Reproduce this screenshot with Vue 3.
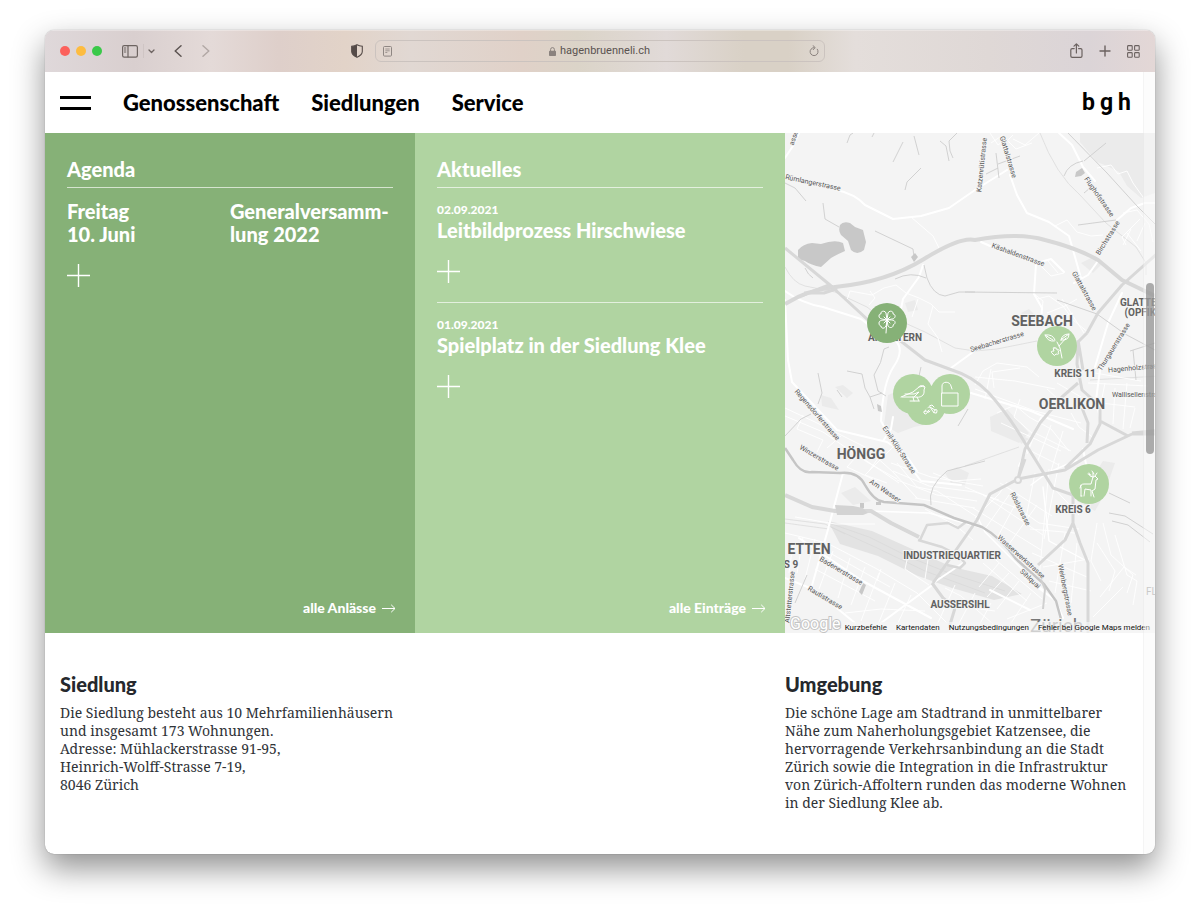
<script setup>
import { ref } from 'vue'

const address = ref('hagenbruenneli.ch')
const nav = ['Genossenschaft', 'Siedlungen', 'Service']
const news = [
  { date: '02.09.2021', title: 'Leitbildprozess Hirschwiese' },
  { date: '01.09.2021', title: 'Spielplatz in der Siedlung Klee' },
]
const mapLinks = ['Kurzbefehle', 'Kartendaten', 'Nutzungsbedingungen', 'Fehler bei Google Maps melden']

const pins = [
  { id: 'klee', label: 'Siedlung Klee', x: 102, y: 190, active: true },
  { id: 'berry', label: 'Siedlung Brombeeri', x: 141, y: 272 },
  { id: 'bird', label: 'Siedlung Vogel', x: 128, y: 261 },
  { id: 'lock', label: 'Siedlung Schloss', x: 165, y: 261 },
  { id: 'flower', label: 'Siedlung Blüte', x: 272, y: 213 },
  { id: 'deer', label: 'Siedlung Hirschwiese', x: 304, y: 351 },
]
const place = (p) => ({ left: (p.x / 370) * 100 + '%', top: (p.y / 500) * 100 + '%' })

const streets = [
  ['asse', 9, 5, -72], ['Rümlangerstrasse', 28, 50, 12], ['Katzenrütistrasse', 197, 32, -84],
  ['Glattalstrasse', 223, 24, 73], ['Flughofstrasse', 314, 64, 55], ['Birchstrasse', 323, 105, -58],
  ['Käshaldenstrasse', 233, 122, 20], ['Glattalstrasse', 299, 158, 61], ['Seebacherstrasse', 212, 209, -17],
  ['Thurgauerstrasse', 329, 214, -58], ['Hagenholzstrasse', 351, 235, -5], ['Wallisellenstrasse', 355, 262, 0],
  ['Regensdorferstrasse', 32, 282, 49], ['Winzerstrasse', 34, 325, 30], ['Emil-Klöti-Strasse', 114, 317, 57],
  ['Am Wasser', 100, 358, 34], ['Badenerstrasse', 56, 438, 31], ['Rautistrasse', 40, 465, 31],
  ['Altstetterstrasse', 5, 464, -84], ['Röslstrasse', 235, 376, 63], ['Wasserwerkstrasse', 236, 424, 42],
  ['Sihlquai', 245, 446, 43], ['Weinbergstrasse', 280, 457, 79],
]
const districts = [
  ['SEEBACH', 257, 193, 14], ['OERLIKON', 287, 276, 14], ['HÖNGG', 76, 326, 14], ['ETTEN', 24, 421, 14],
  ['AFFOLTERN', 110, 208, 10], ['KREIS 11', 290, 244, 10], ['KREIS 6', 288, 380, 10], ['S 9', 6, 435, 10],
  ['INDUSTRIEQUARTIER', 167, 426, 10], ['AUSSERSIHL', 175, 475, 10], ['GLATTBRUGG', 367, 173, 10], ['(OPFIKON)', 364, 183, 10],
]
</script>

<template>
  <div class="desktop">
    <div class="window">
      <header class="toolbar">
        <div class="lights">
          <button class="light red" aria-label="Schliessen"></button>
          <button class="light yellow" aria-label="Minimieren"></button>
          <button class="light green" aria-label="Vergrössern"></button>
        </div>
        <div class="tools left">
          <button aria-label="Seitenleiste">
            <svg width="16" height="13" viewBox="0 0 16 13" fill="none" stroke="#6d6461" stroke-width="1.2"><rect x=".6" y=".6" width="14.8" height="11.6" rx="1.6" /><path d="M6 .6v11.6M2 3h2.2M2 5h2.2M2 7h2.2" /></svg>
          </button>
          <span class="divider"></span>
          <button class="chev" aria-label="Tabgruppen">
            <svg width="7" height="5" viewBox="0 0 7 5" fill="none" stroke="#6d6461" stroke-width="1.3" stroke-linecap="round" stroke-linejoin="round"><path d="m1 1 2.5 2.5L6 1" /></svg>
          </button>
          <button class="back" aria-label="Zurück">
            <svg width="8" height="12" viewBox="0 0 8 12" fill="none" stroke="#5d5452" stroke-width="1.5" stroke-linecap="round" stroke-linejoin="round"><path d="M7 .8 1.2 6 7 11.2" /></svg>
          </button>
          <button class="forward" aria-label="Vorwärts">
            <svg width="8" height="12" viewBox="0 0 8 12" fill="none" stroke="#b2a8a5" stroke-width="1.5" stroke-linecap="round" stroke-linejoin="round"><path d="M1 .8 6.8 6 1 11.2" /></svg>
          </button>
        </div>
        <button class="shield" aria-label="Datenschutz">
          <svg width="12" height="14" viewBox="0 0 12 14"><path d="M6 .7c2 1.1 3.6 1.4 5.3 1.6v5.2c0 2.6-2 4.3-5.3 5.8C2.7 11.8.7 10.1.7 7.5V2.3C2.4 2.1 4 1.8 6 .7z" fill="none" stroke="#554b48" stroke-width="1.1" /><path d="M6 .7v12.6C2.7 11.8.7 10.1.7 7.5V2.3C2.4 2.1 4 1.8 6 .7z" fill="#554b48" /></svg>
        </button>
        <form class="address" @submit.prevent>
          <button type="button" aria-label="Reader">
            <svg width="9" height="11" viewBox="0 0 9 11" fill="none" stroke="#8f8783"><rect x=".5" y=".5" width="8" height="9.6" rx="1" /><path d="M2.3 3h4.4M2.3 4.8h4.4M2.3 6.5h2" stroke-width=".8" /></svg>
          </button>
          <label class="site">
            <svg width="7" height="9" viewBox="0 0 7 9"><path d="M1.6 4V2.5a1.9 1.9 0 0 1 3.8 0V4" fill="none" stroke="#8a827e" /><rect y="3.7" width="7" height="5.3" rx=".8" fill="#8a827e" /></svg>
            <input v-model="address" type="text" aria-label="Adresse" />
          </label>
          <button type="button" aria-label="Neu laden">
            <svg width="10" height="12" viewBox="0 0 10 12" fill="none" stroke="#8a827e" stroke-linecap="round"><path d="M8.3 4.2A4 4 0 1 1 5 2.6M4 .6l2.200 2L4.200 4.700" /></svg>
          </button>
        </form>
        <div class="tools right">
          <button aria-label="Teilen">
            <svg width="13" height="16" viewBox="0 0 13 16" fill="none" stroke="#6b6260" stroke-width="1.2" stroke-linecap="round" stroke-linejoin="round"><path d="M4.200 5.600H2.200A1.400 1.400 0 0 0 .8 7v6a1.400 1.400 0 0 0 1.400 1.400h8.400A1.400 1.400 0 0 0 12 13V7a1.400 1.400 0 0 0-1.400-1.400h-2M6.400 10V1M4 3.200 6.400.8l2.400 2.400" /></svg>
          </button>
          <button aria-label="Neuer Tab">
            <svg width="12" height="12" viewBox="0 0 12 12" stroke="#6b6260" stroke-width="1.4" stroke-linecap="round"><path d="M6 1v10M1 6h10" /></svg>
          </button>
          <button aria-label="Tabübersicht">
            <svg width="13" height="13" viewBox="0 0 13 13" fill="none" stroke="#6b6260" stroke-width="1.1"><rect x=".6" y=".6" width="4.6" height="4.6" rx=".8" /><rect x="7.6" y=".6" width="4.6" height="4.6" rx=".8" /><rect x=".6" y="7.6" width="4.6" height="4.6" rx=".8" /><rect x="7.6" y="7.6" width="4.6" height="4.6" rx=".8" /></svg>
          </button>
        </div>
      </header>

      <div class="page">
        <nav class="nav">
          <button class="burger" aria-label="Menü"><span></span><span></span></button>
          <a v-for="n in nav" :key="n" href="#">{{ n }}</a>
          <a class="logo" href="#" aria-label="bgh"><span>b</span><span>g</span><span>h</span></a>
        </nav>

        <main>
          <div class="panels">
            <section class="panel agenda">
              <h2>Agenda</h2>
              <div class="event">
                <h3>Freitag<br />10. Juni</h3>
                <h3>Generalversamm-<br />lung 2022</h3>
              </div>
              <button class="plus" aria-label="Mehr anzeigen"><svg width="23" height="23" viewBox="0 0 23 23" stroke="#fff" stroke-width="1.4"><path d="M11.500 0v23M0 11.500h23" /></svg></button>
              <a class="more" href="#">alle Anlässe
                <svg width="14" height="9" viewBox="0 0 14 9" fill="none" stroke="#fff"><path d="M0 4.500h13M9.200.8 13 4.500 9.200 8.200" /></svg></a>
            </section>

            <section class="panel aktuelles">
              <h2>Aktuelles</h2>
              <article v-for="n in news" :key="n.date">
                <time>{{ n.date }}</time>
                <h3>{{ n.title }}</h3>
                <button class="plus" aria-label="Mehr anzeigen"><svg width="23" height="23" viewBox="0 0 23 23" stroke="#fff" stroke-width="1.4"><path d="M11.500 0v23M0 11.500h23" /></svg></button>
              </article>
              <a class="more" href="#">alle Einträge
                <svg width="14" height="9" viewBox="0 0 14 9" fill="none" stroke="#fff"><path d="M0 4.500h13M9.200.8 13 4.500 9.200 8.200" /></svg></a>
            </section>

            <section class="map" aria-label="Karte">
              <svg class="canvas" viewBox="0 0 370 500" preserveAspectRatio="xMidYMid slice">
                <g fill="#ebebeb">
                  <path d="M295 0h75v60l-14 5-14-12-8-14-12-6-10-4-17-20z" />
                  <path d="M103 262l20-8 30 12 6 14-10 10-20 4-16 6-14-8zM205 284l17-8 22 24-10 10-28-12zM36 262l10 3 8 12-17-4zM50 254l8-2 10 8-6 5zM318 328l12 2-12 34-8 14-18-10zM120 170l10-3 3 10-10 2zM232 300l12 6-8 5z" />
                  <path d="M236 180l8-4 8 8-6 6zM296 130l12-6 8 8-8 8zM160 340l12-6 12 6-4 12-14-2zM56 360l14-6 16 14-18 4z" />
                </g>
                <path d="M43 388l44 10 40 18 40 18 40 9 30 18-28 6-42-12-34-12-40-20-38-12z" fill="#e3e3e3" />
                <g fill="none" stroke="#d9d9d9" stroke-width=".7">
                  <path d="M44 390l40 14 40 20 40 16 56 18M46 394l44 20 50 24 60 22M0 134q8 16 20 19l30 6 32 15 10 8M120 190l20 9 30 16 20 3 22-2 40-8M255 0q16 42 40 62l26 28 30 24 10 16v12M0 386l40 5 20 10M0 390l44 6M305 247l70-4M180 333l54-19" />
                </g>
                <g fill="none" stroke="#fff" stroke-width=".9" stroke-linejoin="round">
                  <path d="M62 167l3-9 22 4 12-7 12-3 10 8 13 5 12 6 8 8h16M148 173l-5 18 10 14 4 14M133 166l-6 18M85 158l5 7-6 7M126 84l22 19 7 14" />
                  <path d="M205 0l8 12 8-6 10 10 16-6M206 10l12-8M216 14l12-12M228 6l12 6 14-12M270 93l12-6 10 12 14 4 12-1M312 35l14-3 7 9 9-3 6 12 10 14M338 80l14-3 12 14 4 18M342 100l14 18M346 96l-8 16M355 86l-18 18 4 8M360 90l-8 18" />
                  <path d="M256 133l10 10 13-3M263 128l10 12M252 166l12-3 14 10 10 14 16 13M262 180l18-7 12-7M268 188l20-8M272 198l15-12M248 160l10 8-2 20M277 166l22 34" />
                  <path d="M190 252l8-14 14-8 30 4 12 10M200 266l6-30M190 244l40 4 40 8M190 256l60 22 46 12M209 255l-2-16 28-4M212 280l18-8 14 12 22 12 18 22M235 266l-6 18 20 18M216 290l60 28M256 285l-14 36M266 292l-14 38M278 298l-12 40M286 280l8 14 16 12M262 256l22 20M272 250l24 14M246 318l28 14M250 300l36 18M303 250l60 3M310 240l46 8M320 250l-4 20 34 4M330 255l-2 36M342 250l-4 46M350 275l-5 20" />
                  <path d="M180 354l24 10 30 12 20 14 40 6M190 385l24-24 8-12M200 396l24-34M212 405l20-37M222 414l30-42M188 375l68 42M198 362l60 40M215 350l52 33M250 340l-10 50M264 336l-10 110M274 330l-15 76M264 350l30 32M245 396l45 4M247 420l55 24M258 434l46-8M264 448l42 10M280 400l-10 60M292 410l-6 60M312 390l-6 38 10 20M312 410l18 28-6 20M318 390l8 32 22 20-6 18M330 402l12 40 10 6-4 24M315 464l24-30 12 8M308 484l30-30" />
                  <path d="M0 275l30 14 50 25 28 25 24 26M0 283l38 16 44 30 30 17M18 282l-6 14 26 11-6 12M56 303l-14 12M80 314l-18 20 30 14M70 320l44 30M112 310l-32 32 22 8M98 318l-14 20" />
                  <path d="M106 330l40 14 52 9M108 338l36 15 46 6 24 8M112 347l40 15 40 6M130 365l60 10M148 340l20 8 28-2M112 330l20 24 20 4 40 26M140 376l30 16 18 15" />
                  <path d="M0 400l42 10 50 26 40 24 30 30M10 384l40 7h40M8 410l-4 30M18 404l-6 36M30 406l-10 40M48 418l-14 38M65 425l-12 40M80 434l-14 38M94 440l-18 48M110 450l-18 44M126 462l-14 30M30 436l60 32M45 420l60 34M60 480l36-4 44 2M124 418l-4 18 24 16M96 436l-4 12M144 420l-4 26M160 455l16 8 32 28M170 452l-18 40M190 460l-20 38M206 470l-16 30M150 470l60 8M214 430l-20 24M224 440l-22 24M234 448l-22 28M205 422l52 44M198 430l44 38M246 460l-20 30M262 470l-40 16" />
                </g>
                <g fill="none" stroke="#fff" stroke-width="2" stroke-linecap="round" stroke-linejoin="round">
                  <path d="M0 25l8-12L14 0M52 57q18 4 28 15l28 14 28-3 28-8 26-18 32-20M225 42l7 20 10 18 22 9 20 14 8 28 7 25M274 0l13 12 11 22 12 14M332 87l14-12 14-5h12M313 128l-10 14-14 8M251 131l-2 30 8 14-1 14M196 109q30 14 56 21l14-4 13 13M0 158q16 12 38 16l38 12 26 20M138 132l-4 12-16 22-6 30M110 207q10 10-1 26t-13 55l14 26 26 34 40 4M0 167l3 60 4 22 45 48 50 12 18 12 12 17M98 308l8-12 2-12M188 219l-22 16M315 237l-4 30 4 18M186 260l60 18 42 18M256 285l-22 48M298 316l4 20M337 160l-14 30-13 44M58 340l-16 60-16 56M14 405l62 42 70 38M146 453l-50 37M178 430l-30 20M0 445l30 12 40 33M240 445l30 22 8 18M205 457l40 20" />
                  <path d="M84 378l60 2 50 14M193 385l7 14 60 60M246 352l16-12 30-13M258 354l6 54 34 18" stroke-width="1.4" />
                </g>
                <g fill="none" stroke="#cdcdcd" stroke-width=".9" stroke-linejoin="round">
                  <path d="M62 10l3-8 3-2M87 4l2-4M108 29l10-20M129 3l5 19M172 0l-8 8 1 10 3 7M155 8l6 5 3 15M0 50l10 5 11 13M120 57l2-8 14-14M38 70l2 16 14 8M90 98l38 18 1 8M20 135q3 7 8 10M110 146q16-8 31-1M139 132l3 13q6 17 18 18l14-4h16M201 41l12-6M211 20l3 25M213 31l22-8M283 0l39 40 30 33 20 20M279 43q4-12 19-15M299 28l22-18M299 60l6-5M293 92l38-5M272 167l40 14 28 20 30 16M180 159l92 1M348 217l3 30M345 218l25-8" />
                  <path d="M104 214l-5 2q-2 14-10 26l4 16 8 5M62 238l15 3 3 14 5 9 12-4M85 264l4 12M33 240l4 20-4 11M52 257l5 7M136 234l-4 18M183 276l-10 17M26 281l-10 5-16 17M324 360l21 10M324 380l16 3 28 18M327 388l16 4 22 17M146 372q-4-18 16-34l38-10M10 470l12-28" />
                </g>
                <g fill="#c8c8c8">
                  <path d="M55 92q3-4 10-2l5 4 8 3 3 12-2 8q-7 6-13 0l-3-9-7-6q-3-4-1-10zM13 117q5-6 14-7l9 1q14-5 22-1l2 8q-9 4-14 7l-10 9q-10-2-16-6l-7-2z" />
                  <path d="M126 124l4-4 3 4-4 5zM291 39l6-4 3 5-4 3-6 1zM54 374h8l2 4H54zM91 369h5v3h-5zM75 370h4v5h-4zM92 271l4 2 1 6-4-1zM78 450l3 2-4 10-3-3z" />
                </g>
                <g fill="none" stroke="#d8d8d8" stroke-width="3" stroke-linejoin="round">
                  <path d="M0 171q22-14 50-17 52-5 89-28t51-19q43-8 70 0 32 8 53 20l24 20 33 16" stroke-width="4" />
                  <path d="M0 115l45 37 38 35 34 22 23 18 27 10q20 6 36 22 20 22 37 51l28 45 20 7" />
                  <path d="M16 163l28-11 7 4-12 4h-20M302 200l11-20 24-28 37-33M302 200l-9 9-1 22 5 26 18 16v18l-10 20-25 24M293 207l5 30M297 275l6 15-1 20M315 288l28 15M377 301h-30l-34 16-33 20-47 9-28 15-13 26-44 63M377 297l-30 3M233 346l7-30 15-26 22-26 16-14M233 346l7-20" />
                  <path d="M288 360v30l-8 17-27 25M288 390l7 20 8 20v70M147 450l11 15 12 10-6 20" />
                  <path d="M135 407l7-15 21-2 10 5 8-6M133 407l24 7 16 8 7 8-5 5-13-3" stroke-width="2.5" />
                  <path d="M0 362l27 12 23 4h36l20 12 28 14" stroke-width="4" />
                  <path d="M50 372l18 1 10 2 5 5-5 2H52z" stroke="none" fill="#d3d3d3" />
                </g>
                <path d="M0 315l8 12q8 14 19 12l28 1q18-2 25 12 9 16 19 17l40 3 30 13 28 9q18 10 34 32l28 25 12 17 5 18" fill="none" stroke="#c5c5c5" stroke-width="2.5" />
                <path d="M232 421l22 21 6 14-2 20" fill="none" stroke="#d0d0d0" stroke-width="2" />
                <circle cx="233" cy="347" r="3" fill="#f5f5f5" stroke="#d8d8d8" stroke-width="2" />
                <g class="streets" text-anchor="middle">
                  <text v-for="(s, i) in streets" :key="i" dy="2" :transform="`translate(${s[1]} ${s[2]}) rotate(${s[3]})`">{{ s[0] }}</text>
                </g>
                <g class="districts" text-anchor="middle">
                  <text v-for="d in districts" :key="d[0]" :x="d[1]" :y="d[2]" :font-size="d[3]">{{ d[0] }}</text>
                </g>
                <text class="faint" x="361" y="462" font-size="10">FLUNTERN</text>
                <text class="city" x="245" y="499">Zürich</text>
                <text class="google" x="5" y="496">Google</text>
              </svg>

              <button v-for="p in pins" :key="p.id" class="pin" :class="{ active: p.active }" :style="place(p)" :aria-label="p.label">
                <svg width="40" height="40" viewBox="0 0 40 40" fill="none" stroke="#fff" stroke-width="1" stroke-linecap="round" stroke-linejoin="round">
                  <path v-if="p.id === 'klee'" d="M20 17c-5-1-8-1-8-4 0-2 1-2 2-2-1-3 4-4 5-1l1 7zM20 17l1-7c1-3 6-2 5 1 3 0 3 5-1 5zM20 17c-4 0-8 0-8 3 0 2 1 3 2 3 0 3 4 3 5 0zM20 17l1 6c2 3 6 1 5-1 3-1 3-5-1-5zM20 17l-1 13M17 14l3 3 3-3M17 20l3-3 3 3" />
                  <path v-else-if="p.id === 'berry'" d="M19 26q1-4 5-4l5 3M24 22l4 6M23 21l3-1 2 2M19 26q-2 0-1 2t3 0-2-2M23 25q-2 1-1 2t2-1M29 25q-2 2 0 3t2-2-2-1" />
                  <path v-else-if="p.id === 'bird'" d="M8 23l12-5 6-5c1-2 4-2 6 0l-1 3c1 6-4 8-9 7H9M12 20h9l5-2-5 5M20 23l1 4M24 23l2 4M17 27h9M31 13v-1l-5 1" />
                  <path v-else-if="p.id === 'lock'" d="M12 19h16v13H12zM12 19v-7c0-5 8-5 9 0l1 3" />
                  <path v-else-if="p.id === 'flower'" d="M25 32l-2-10-3-6M22 20l7-8M17 15q-6 1-9-6 8-1 10 5zM24 14q1-6 8-6 0 7-8 6zM8 9l8 5M32 8l-7 5M18 22q-3-2-1 3-5 0-1 3 1 3 3 0 4 1 2-2 3-3-1-2 0-3-2-2z" />
                  <path v-else d="M12 32v-8q-1-4 3-4h7l2-7 2-1 3 3-2 1-1 9-3 2 2 6M15 32l1-7 6 1v6M12 32h1M12 21l-1 3M24 13l-3-1-1-3M24 13v-4M26 12l2-3M22 11l-3-1M25 10l-2-3" />
                </svg>
              </button>
              <footer class="maplinks"><a v-for="l in mapLinks" :key="l" href="#">{{ l }}</a></footer>
            </section>
          </div>

          <div class="info">
            <section>
              <h2>Siedlung</h2>
              <p>Die Siedlung besteht aus 10 Mehrfamilienhäusern<br />und insgesamt 173 Wohnungen.<br />Adresse: Mühlackerstrasse 91-95,<br />Heinrich-Wolff-Strasse 7-19,<br />8046 Zürich</p>
            </section>
            <section>
              <h2>Umgebung</h2>
              <p>Die schöne Lage am Stadtrand in unmittelbarer<br />Nähe zum Naherholungsgebiet Katzensee, die<br />hervorragende Verkehrsanbindung an die Stadt<br />Zürich sowie die Integration in die Infrastruktur<br />von Zürich-Affoltern runden das moderne Wohnen<br />in der Siedlung Klee ab.</p>
            </section>
          </div>
        </main>
        <div class="track"><div class="thumb"></div></div>
      </div>
    </div>
  </div>
</template>

<style>
html, body { background: #fff; }
</style>

<style scoped>
* { box-sizing: border-box; }
.desktop { min-height: 100vh; display: flex; padding: 30px 45px 59px; font-family: Lato, "Open Sans", sans-serif; }
.window { flex: 1; min-width: 0; display: flex; flex-direction: column; border-radius: 9px; overflow: hidden; background: #fff; box-shadow: 0 0 1px rgba(0, 0, 0, .45), 0 14px 32px rgba(0, 0, 0, .44); }
button { border: 0; padding: 0; background: none; display: flex; align-items: center; justify-content: center; }
a { color: inherit; text-decoration: none; }
h2, h3, p { margin: 0; }

.toolbar { height: 42px; display: grid; grid-template-columns: 1fr 450px 1fr; align-items: center; padding: 0 15px; background: linear-gradient(90deg, #dfd8da 0%, #d9cfcf 8%, #e4dad8 15%, #decfca 21%, #e2d3c8 27%, #e1d8d3 33%, #e0d1c8 43%, #dbd4c8 48%, #e1dad8 56%, #d9d1c6 63%, #d9d1c6 67%, #e4dedb 73%, #dfd8d6 85%, #dbd4d7 94%, #e3d7d6 100%); box-shadow: inset 0 1px 0 rgba(255, 255, 255, .3); }
.lights { grid-row: 1; grid-column: 1; display: flex; gap: 6px; }
.light { width: 10px; height: 10px; border-radius: 50%; }
.red { background: #fc615c; }
.yellow { background: #fdbc40; }
.green { background: #3ac949; }
.tools { display: flex; align-items: center; }
.left { grid-row: 1; grid-column: 1; padding-left: 62px; }
.divider { width: 1px; height: 14px; margin-left: 5px; background: #cfc5c4; }
.chev { margin-left: 4px; }
.back { margin-left: 19px; }
.forward { margin-left: 20px; }
.right { gap: 16px; justify-content: flex-end; }
.shield { grid-row: 1; grid-column: 1; justify-self: end; margin-right: 12px; }
.address { height: 22px; display: flex; align-items: center; justify-content: space-between; padding: 0 5px 0 7px; border: 1px solid #cbc3bf; border-radius: 6px; }
.site { display: flex; align-items: center; gap: 4px; }
.site input { width: 92px; border: 0; padding: 0; background: none; outline: 0; color: #5a5350; font: 11px/16px Roboto, sans-serif; }

.page { flex: 1; position: relative; display: flex; flex-direction: column; }
.nav { height: 61px; display: flex; align-items: center; gap: 32px; padding: 0 24px 0 15px; color: #000; font-size: 22px; line-height: 24px; font-weight: 900; }
.burger { width: 31px; flex-direction: column; gap: 8px; }
.burger span { width: 100%; height: 3px; background: #000; }
.logo { margin-left: auto; display: flex; gap: 5px; font: bold 23px/32px Roboto, sans-serif; }

.panels { display: grid; grid-template-columns: repeat(3, minmax(0, 1fr)); min-height: 500px; }
.panel { display: flex; flex-direction: column; padding: 25px 22px 16px; color: #fff; }
.agenda { background: #86b177; }
.aktuelles { background: #b0d4a1; }
.panel h2, .panel h3 { font-size: 20px; line-height: 23px; font-weight: 900; }
.panel h2 { padding-bottom: 6px; border-bottom: 1px solid rgba(255, 255, 255, .65); }
.event { display: grid; grid-template-columns: 1fr 1fr; margin-top: 12px; }
.event + .plus { margin-top: 18px; }
.plus { align-self: flex-start; }
article { display: flex; flex-direction: column; padding: 13px 0 19px; border-bottom: 1px solid rgba(255, 255, 255, .65); }
article:nth-of-type(2) { border: 0; }
article .plus { margin-top: 18px; }
time { font-size: 12px; line-height: 18px; font-weight: 900; }
.more { margin-top: auto; align-self: flex-end; margin-right: -3px; display: flex; align-items: center; gap: 6px; font-size: 14px; line-height: 18px; font-weight: 900; }

.map { position: relative; overflow: hidden; background: #f4f4f4; font-family: Roboto, sans-serif; }
.canvas { display: block; width: 100%; height: 100%; position: absolute; }
.canvas text { stroke: #f5f5f5; stroke-width: 2px; paint-order: stroke; }
.streets { font-size: 7px; fill: #555; }
.districts { font-weight: 700; fill: #616161; }
.canvas .faint { fill: #999; }
.canvas .city { font-size: 19px; fill: #777; }
.canvas .google { font-size: 16px; fill: #fff; stroke: #c4c4c4; }
.pin { position: absolute; width: 40px; height: 40px; margin: -20px 0 0 -20px; border-radius: 50%; background: #b0d4a1; }
.pin.active { background: #86b177; }
.maplinks { position: absolute; right: 0; bottom: 0; display: flex; gap: 9px; padding: 0 5px 0 3px; background: rgba(245, 245, 245, .7); color: #111; font-size: 8px; line-height: 11px; white-space: nowrap; }

.info { display: grid; grid-template-columns: minmax(0, 2fr) minmax(0, 1fr); padding: 39px 0 41px; color: #303338; }
.info section:first-child { padding-left: 15px; }
.info h2 { color: #25282d; font-size: 20px; line-height: 24px; font-weight: 900; }
.info p { margin-top: 8px; font: 14px/18px "Noto Serif", "Liberation Serif", serif; }

.track { position: absolute; top: 0; right: 0; bottom: 0; width: 12px; padding: 211px 1px 0 2px; border-left: 1px solid rgba(0, 0, 0, .03); background: rgba(250, 250, 250, .5); }
.thumb { height: 171px; border-radius: 5px; background: rgba(120, 120, 120, .6); }
</style>
